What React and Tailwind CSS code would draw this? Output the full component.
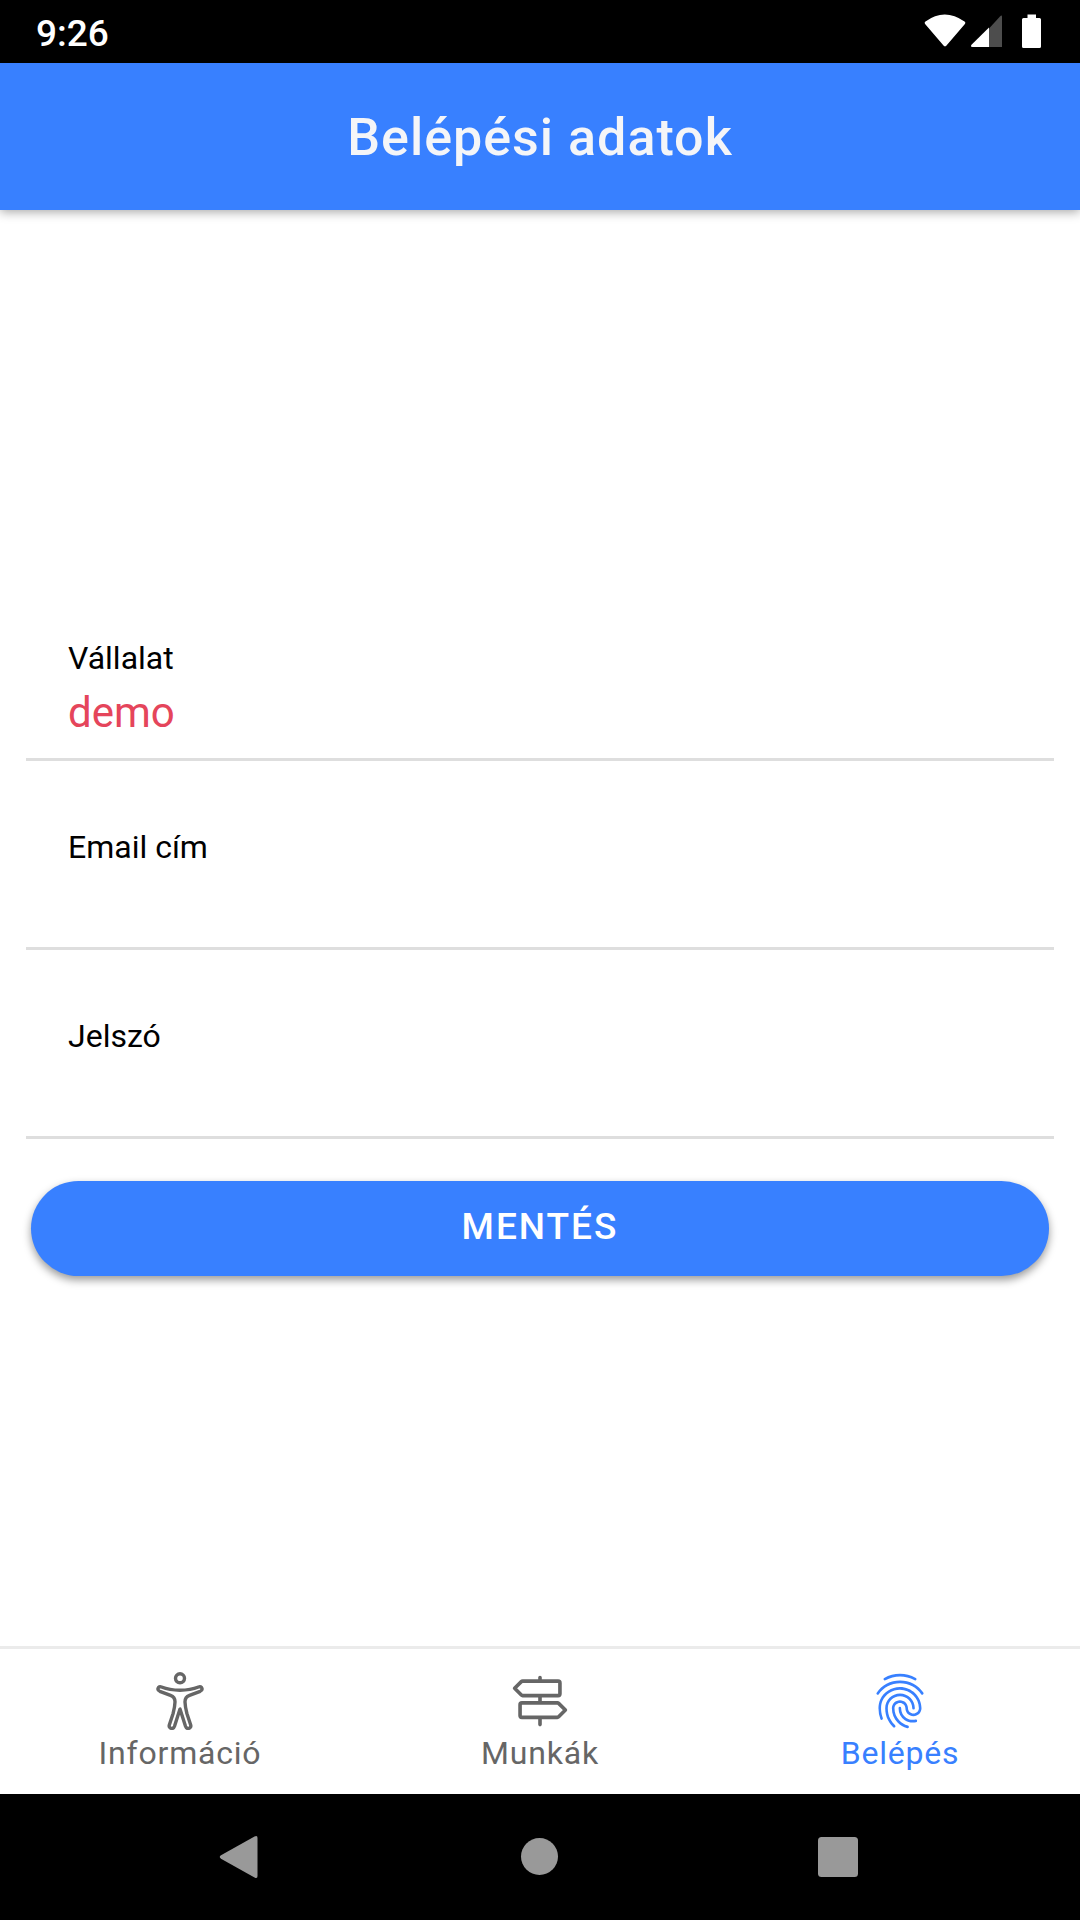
import { useState } from "react";
import { IoTrailSignOutline, IoFingerPrintOutline } from "react-icons/io5";

function BodyIcon({ className }) {
  return (
    <svg
      className={className}
      viewBox="0 0 58 58"
      fill="none"
      stroke="currentColor"
      strokeWidth="3.4"
      strokeLinejoin="round"
      aria-hidden="true"
    >
      <circle cx="29" cy="6.300" r="4.500" />
      <path d="M10.500 15C16 17.200 22 18.200 29 18.200S42 17.200 47.500 15C51.200 13.700 52.300 18 49.200 19.300L38.500 23.300C34.800 24.700 33.900 26.500 34 30C34.100 34.500 35 38 35.900 41.500L39.700 53C40.700 56.600 35.700 57.800 34.500 54.300L29 37L23.500 54.300C22.300 57.800 17.300 56.600 18.300 53L22.100 41.500C23 38 23.900 34.500 24 30C24.100 26.500 23.200 24.700 19.500 23.300L8.800 19.300C5.700 18 6.800 13.700 10.500 15Z" />
    </svg>
  );
}

const FIELDS = [
  { id: "company", label: "Vállalat", type: "text", initial: "demo" },
  { id: "email", label: "Email cím", type: "email", initial: "" },
  { id: "password", label: "Jelszó", type: "password", initial: "" },
];

const TABS = [
  { label: "Információ", href: "#info", Icon: BodyIcon, active: false },
  { label: "Munkák", href: "#jobs", Icon: IoTrailSignOutline, active: false },
  { label: "Belépés", href: "#login", Icon: IoFingerPrintOutline, active: true },
];

function StatusBar() {
  return (
    <div className="flex h-[63px] items-center justify-between bg-black pr-9 pl-9 text-white">
      <span className="pt-1 text-[37px] leading-[42px] font-medium">9:26</span>
      <svg className="h-9 w-[120px]" viewBox="0 0 120 36" fill="currentColor" aria-hidden="true">
        <path d="M1.500 7.500Q20.500-6.500 40.500 7.500Q42 8.600 40.700 10.200L22.500 31.500Q21 33.200 19.500 31.500L1.300 10.200Q0 8.600 1.500 7.500Z" />
        <path d="M78 3V33H65V14.500L76 2.500Q78 .5 78 3Z" fillOpacity=".3" />
        <path d="M65 13.500V33H48.500Q46 33 47.500 30.800Z" />
        <path d="M103.500 .5h8.500V4H115.500q1.500 0 1.500 1.500v27q0 1.500-1.500 1.500H99.500q-1.500 0-1.500-1.500v-27Q98 4 99.500 4h4Z" />
      </svg>
    </div>
  );
}

function Field({ id, label, type, initial }) {
  const [value, setValue] = useState(initial);
  return (
    <div className="flex flex-col border-b-[3px] border-[#dedede] px-[42px] pt-[66px] pb-[19px]">
      <label htmlFor={id} className="text-[32px] leading-10 text-black">
        {label}
      </label>
      <input
        id={id}
        type={type}
        value={value}
        onChange={(e) => setValue(e.target.value)}
        className="mt-[9px] h-[52px] w-full bg-transparent text-[42px] leading-[52px] text-[#e5455b] outline-none"
      />
    </div>
  );
}

function SystemNav() {
  return (
    <div className="grid h-[126px] grid-cols-3 bg-black px-[90px] text-[#999999]">
      <button type="button" aria-label="Vissza" className="flex items-center justify-center">
        <svg className="size-11" viewBox="0 0 44 44" fill="currentColor">
          <path d="M3 20.300 36.500 1.600Q39.500 0 39.500 3V41Q39.500 44 36.500 42.400L3 23.700Q.5 22 3 20.300Z" />
        </svg>
      </button>
      <button type="button" aria-label="Kezdőképernyő" className="flex items-center justify-center">
        <svg className="size-11" viewBox="0 0 44 44" fill="currentColor">
          <circle cx="21.500" cy="21.500" r="18.500" />
        </svg>
      </button>
      <button type="button" aria-label="Áttekintés" className="flex items-center justify-center">
        <svg className="size-11" viewBox="0 0 44 44" fill="currentColor">
          <rect x="0" y="2" width="40" height="40" rx="3.500" />
        </svg>
      </button>
    </div>
  );
}

export default function App() {
  return (
    <div className="flex min-h-screen flex-col bg-white font-[Roboto,sans-serif]">
      <StatusBar />
      <header className="relative flex h-[147px] items-center justify-center bg-[#3880ff] pt-[2px] shadow-[0_2px_10px_rgba(0,0,0,0.35)]">
        <h1 className="text-[52px] leading-[60px] font-medium tracking-[1px] text-[#f4f5f8]">Belépési adatok</h1>
      </header>

      <main className="flex flex-1 flex-col justify-center px-[26px]">
        <form onSubmit={(e) => e.preventDefault()}>
          {FIELDS.map((field) => (
            <Field key={field.id} {...field} />
          ))}
          <div className="px-[5px] pt-[42px] pb-2">
            <button
              type="submit"
              className="h-[95px] w-full rounded-full bg-[#3880ff] pb-1 text-[37px] leading-[42px] font-medium tracking-[2px] text-white uppercase shadow-[0_4px_8px_rgba(0,0,0,0.4)]"
            >
              Mentés
            </button>
          </div>
        </form>
      </main>

      <nav className="grid h-[148px] grid-cols-3 border-t-[3px] border-[#ebebeb]">
        {TABS.map(({ label, href, Icon, active }) => (
          <a
            key={label}
            href={href}
            aria-current={active ? "page" : undefined}
            className={`flex flex-col items-center pt-[23px] ${active ? "text-[#3880ff]" : "text-[#666666]"}`}
          >
            <Icon className="size-[58px]" />
            <span className="mt-[3px] text-[32px] leading-10 tracking-wide">{label}</span>
          </a>
        ))}
      </nav>
      <SystemNav />
    </div>
  );
}
